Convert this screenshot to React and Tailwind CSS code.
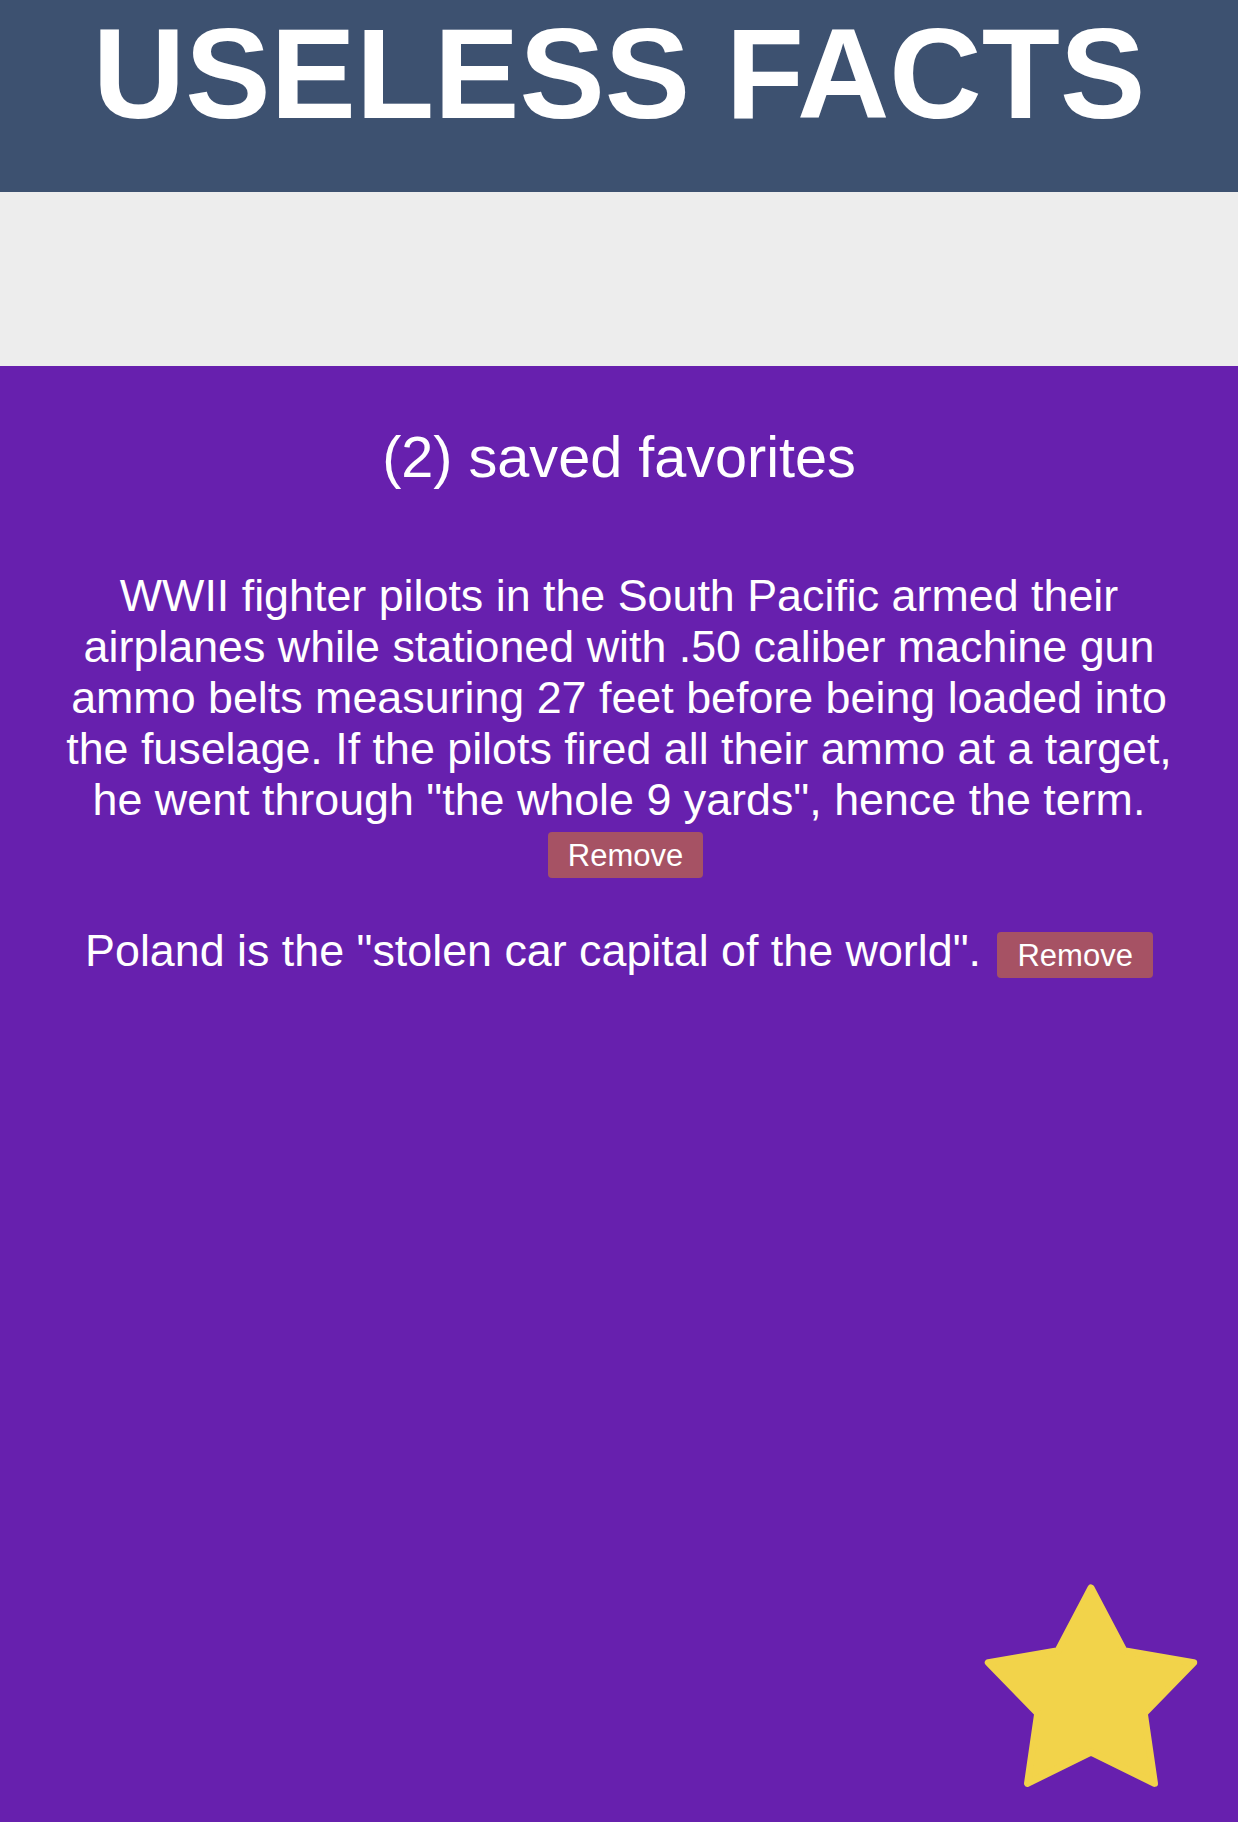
import React from "react";

const favorites = [
  {
    id: 1,
    text: 'WWII fighter pilots in the South Pacific armed their airplanes while stationed with .50 caliber machine gun ammo belts measuring 27 feet before being loaded into the fuselage. If the pilots fired all their ammo at a target, he went through "the whole 9 yards", hence the term.',
    btn: "ml-[13px]",
  },
  {
    id: 2,
    text: 'Poland is the "stolen car capital of the world".',
    btn: "ml-[4px]",
  },
];

function Star() {
  return (
    <svg
      viewBox="-120 -120 240 240"
      className="w-[240px] h-[240px]"
      aria-hidden="true"
    >
      <polygon
        points="0,-108 33,-45.3 102.7,-33.4 53.3,17.3 63.5,87.4 0,56 -63.5,87.4 -53.3,17.3 -102.7,-33.4 -33,-45.3"
        fill="#f2d34a"
        stroke="#f2d34a"
        strokeWidth="7"
        strokeLinejoin="round"
      />
    </svg>
  );
}

function App() {
  return (
    <div className="min-h-[1822px] flex flex-col font-['Liberation_Sans',Arial,sans-serif] text-white">
      {/* Header */}
      <header className="h-[192px] bg-[#3d5170]">
        <h1 className="text-center text-[128px] font-bold leading-[147px]">
          USELESS FACTS
        </h1>
      </header>

      {/* Empty band */}
      <div className="h-[174px] bg-[#ededed]"></div>

      {/* Favorites */}
      <main className="flex-1 bg-[#6720ae] px-[60px] text-center">
        <h2 className="mt-[58px] text-[57.6px] leading-[66px]">
          (2) saved favorites
        </h2>

        <ul className="mt-[80px] flex flex-col gap-[47px]">
          {favorites.map((f) => (
            <li key={f.id} className="text-[44.8px] leading-[51px]">
              {f.text}{" "}
              <button
                className={`${f.btn} inline-block h-[46px] px-[20px] rounded-[4px] bg-[#a65264] text-[31px] leading-[47px] text-white align-baseline`}
              >
                Remove
              </button>
            </li>
          ))}
        </ul>
      </main>

      {/* Floating favorites star */}
      <div className="fixed right-[27px] bottom-[6px]">
        <Star />
      </div>
    </div>
  );
}

export default App;
